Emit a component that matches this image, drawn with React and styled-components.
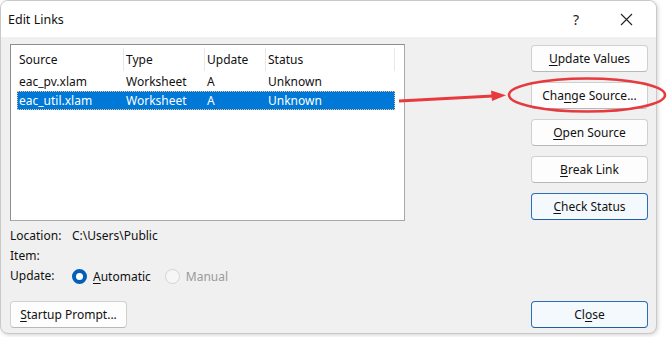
import React from "react";
import styled, { createGlobalStyle } from "styled-components";

const Global = createGlobalStyle`
  html, body { margin: 0; padding: 0; background: #ffffff; }
  body { font-family: "Noto Sans", "Open Sans", sans-serif; font-size: 12px; color: #111; }
`;

const Stage = styled.div`
  position: relative;
  width: 667px;
  height: 337px;
  overflow: hidden;
`;

const Dialog = styled.div`
  width: 657px;
  height: 334px;
  box-sizing: border-box;
  border: 1px solid #c9c9c9;
  border-radius: 8px;
  background: #f0f0f0;
  box-shadow: 1px 1px 4px rgba(0, 0, 0, 0.18);
  display: flex;
  flex-direction: column;
  overflow: hidden;
`;

const TitleBar = styled.div`
  height: 36px;
  background: #ffffff;
  display: flex;
  align-items: center;
  padding: 0 5px 0 7px;
  flex-shrink: 0;
`;

const Title = styled.div`
  flex: 1;
  font-size: 12.5px;
  color: #111;
`;

const TitleButton = styled.div`
  width: 50px;
  height: 36px;
  display: flex;
  align-items: center;
  justify-content: center;
  font-size: 14px;
  color: #222;
`;

const Body = styled.div`
  flex: 1;
  display: grid;
  grid-template-columns: 395px 1fr;
  column-gap: 126px;
  padding: 7px 8px 5px 9px;
`;

const LeftCol = styled.div`
  display: flex;
  flex-direction: column;
`;

const RightCol = styled.div`
  display: flex;
  flex-direction: column;
  gap: 10px;
  padding-top: 1px;
`;

const ListBox = styled.div`
  height: 177px;
  box-sizing: border-box;
  border: 1px solid #a8a8a8;
  border-top-color: #8e8e8e;
  border-left-color: #8e8e8e;
  background: #ffffff;
  padding: 3px 0 0 6px;
`;

const Row = styled.div`
  display: grid;
  grid-template-columns: 107px 81px 61px 129px;
  height: ${(p) => (p.$header ? "23px" : "19px")};
  align-items: center;
  width: 378px;
  box-sizing: border-box;
  background: ${(p) => (p.$selected ? "#0078d7" : "transparent")};
  color: ${(p) => (p.$selected ? "#ffffff" : "#111")};
  outline: ${(p) => (p.$selected ? "1px dotted #f5c48a" : "none")};
  outline-offset: -1px;
  margin-bottom: ${(p) => (p.$header ? "1px" : "0")};
`;

const Cell = styled.div`
  height: 100%;
  display: flex;
  align-items: center;
  white-space: nowrap;
  border-right: ${(p) => (p.$header ? "1px solid #e8e8e8" : "none")};
  padding-left: 2px;
`;

const Info = styled.div`
  display: grid;
  grid-template-columns: 62px 1fr;
  align-items: center;
  height: 20px;
  margin-top: ${(p) => p.$top || "0"};
`;

const Radios = styled.div`
  display: flex;
  align-items: center;
  gap: 14px;
  padding-top: 2px;
`;

const RadioItem = styled.label`
  display: flex;
  align-items: center;
  gap: 6px;
  color: ${(p) => (p.$disabled ? "#9a9a9a" : "#111")};
`;

const RadioDot = styled.span`
  width: 15px;
  height: 15px;
  box-sizing: border-box;
  border-radius: 50%;
  display: inline-block;
  ${(p) =>
    p.$checked
      ? "background: #005fb8; border: 4px solid #005fb8;"
      : "background: #f6f6f6; border: 1px solid #d4d4d4;"}
  &::after {
    content: "";
    display: ${(p) => (p.$checked ? "block" : "none")};
    width: 7px;
    height: 7px;
    border-radius: 50%;
    background: #ffffff;
  }
`;

const Spacer = styled.div`
  flex: 1;
`;

const Button = styled.div`
  height: 27px;
  box-sizing: border-box;
  border-radius: 4px;
  border: 1px solid ${(p) => (p.$default ? "#2a6fb8" : "#d0d0d0")};
  border-bottom-color: ${(p) => (p.$default ? "#1f5ea3" : "#b8b8b8")};
  background: ${(p) => (p.$default ? "#f4f9fe" : "#fdfdfd")};
  display: flex;
  align-items: center;
  justify-content: center;
  width: 117px;
  color: #111;
  white-space: nowrap;
`;

const Key = styled.span`
  text-decoration: underline;
  text-underline-offset: 2px;
`;

const Annotation = styled.svg`
  position: absolute;
  left: 0;
  top: 0;
  pointer-events: none;
`;

const rows = [
  ["eac_pv.xlam", "Worksheet", "A", "Unknown"],
  ["eac_util.xlam", "Worksheet", "A", "Unknown"],
];

export default function App() {
  return (
    <Stage>
      <Global />
      <Dialog>
        <TitleBar>
          <Title>Edit Links</Title>
          <TitleButton>?</TitleButton>
          <TitleButton>
            <svg width="13" height="13" viewBox="0 0 13 13">
              <path d="M1 1 L12 12 M12 1 L1 12" stroke="#222" strokeWidth="1.1" fill="none" />
            </svg>
          </TitleButton>
        </TitleBar>
        <Body>
          <LeftCol>
            <ListBox>
              <Row $header>
                <Cell $header>Source</Cell>
                <Cell $header>Type</Cell>
                <Cell $header>Update</Cell>
                <Cell $header>Status</Cell>
              </Row>
              {rows.map((r, i) => (
                <Row key={r[0]} $selected={i === 1}>
                  {r.map((c) => (
                    <Cell key={c}>{c}</Cell>
                  ))}
                </Row>
              ))}
            </ListBox>
            <Info $top="4px">
              <span>Location:</span>
              <span>C:\Users\Public</span>
            </Info>
            <Info>
              <span>Item:</span>
              <span />
            </Info>
            <Info>
              <span>Update:</span>
              <Radios>
                <RadioItem>
                  <RadioDot $checked />
                  <span>
                    <Key>A</Key>utomatic
                  </span>
                </RadioItem>
                <RadioItem $disabled>
                  <RadioDot />
                  <span>Manual</span>
                </RadioItem>
              </Radios>
            </Info>
            <Spacer />
            <Button>
              <span>
                <Key>S</Key>tartup Prompt...
              </span>
            </Button>
          </LeftCol>
          <RightCol>
            <Button>
              <span>
                <Key>U</Key>pdate Values
              </span>
            </Button>
            <Button>
              <span>
                Cha<Key>n</Key>ge Source...
              </span>
            </Button>
            <Button>
              <span>
                <Key>O</Key>pen Source
              </span>
            </Button>
            <Button>
              <span>
                <Key>B</Key>reak Link
              </span>
            </Button>
            <Button $default>
              <span>
                <Key>C</Key>heck Status
              </span>
            </Button>
            <Spacer />
            <Button $default>
              <span>
                Cl<Key>o</Key>se
              </span>
            </Button>
          </RightCol>
        </Body>
      </Dialog>
      <Annotation width="667" height="337" viewBox="0 0 667 337">
        <ellipse cx="587" cy="95" rx="78" ry="16.5" fill="none" stroke="#e63a3f" strokeWidth="2.6" />
        <path d="M399 101 L493 96" stroke="#e63a3f" strokeWidth="2.8" fill="none" />
        <path d="M506 95.3 L491 90.5 L492 101 Z" fill="#e63a3f" />
      </Annotation>
    </Stage>
  );
}
